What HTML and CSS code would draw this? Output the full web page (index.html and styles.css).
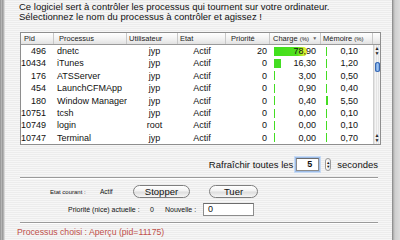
FILE: index.html
```html
<!DOCTYPE html>
<html lang="fr">
<head>
    <meta charset="UTF-8">
    <title>Processus</title>
    <link rel="stylesheet" href="styles.css">
</head>
<body>
    <div class="desk">
        <div class="drawer-left"></div>
        <div class="window">
            <p class="intro">Ce logiciel sert à contrôler les processus qui tournent sur votre ordinateur.<br>Sélectionnez le nom du processus à contrôler et agissez !</p>

            <div class="list">
                <div class="list-head">
                    <div class="col c-pid">Pid</div>
                    <div class="col c-name">Processus</div>
                    <div class="col c-user">Utilisateur</div>
                    <div class="col c-state">Etat</div>
                    <div class="col c-prio">Priorité</div>
                    <div class="col c-load">Charge <small>(%)</small> <span class="sort">▼</span></div>
                    <div class="col c-mem">Mémoire <small>(%)</small></div>
                    <div class="col c-corner"></div>
                </div>
                <div class="list-body">
                    <div class="rows">
                        <div class="row">
                            <div class="col c-pid">496</div>
                            <div class="col c-name">dnetc</div>
                            <div class="col c-user">jyp</div>
                            <div class="col c-state">Actif</div>
                            <div class="col c-prio">20</div>
                            <div class="col c-load"><div class="gauge"><span class="fill hot" style="width: 78.9%"></span><span class="val">78,90</span></div></div>
                            <div class="col c-mem"><div class="gauge"><span class="fill" style="width: 0.1%"></span><span class="val">0,10</span></div></div>
                        </div>
                        <div class="row">
                            <div class="col c-pid">10434</div>
                            <div class="col c-name">iTunes</div>
                            <div class="col c-user">jyp</div>
                            <div class="col c-state">Actif</div>
                            <div class="col c-prio">0</div>
                            <div class="col c-load"><div class="gauge"><span class="fill" style="width: 16.3%"></span><span class="val">16,30</span></div></div>
                            <div class="col c-mem"><div class="gauge"><span class="fill" style="width: 1.2%"></span><span class="val">1,20</span></div></div>
                        </div>
                        <div class="row">
                            <div class="col c-pid">176</div>
                            <div class="col c-name">ATSServer</div>
                            <div class="col c-user">jyp</div>
                            <div class="col c-state">Actif</div>
                            <div class="col c-prio">0</div>
                            <div class="col c-load"><div class="gauge"><span class="fill" style="width: 3%"></span><span class="val">3,00</span></div></div>
                            <div class="col c-mem"><div class="gauge"><span class="fill" style="width: 0.5%"></span><span class="val">0,50</span></div></div>
                        </div>
                        <div class="row">
                            <div class="col c-pid">454</div>
                            <div class="col c-name">LaunchCFMApp</div>
                            <div class="col c-user">jyp</div>
                            <div class="col c-state">Actif</div>
                            <div class="col c-prio">0</div>
                            <div class="col c-load"><div class="gauge"><span class="fill" style="width: 0.9%"></span><span class="val">0,90</span></div></div>
                            <div class="col c-mem"><div class="gauge"><span class="fill" style="width: 0.4%"></span><span class="val">0,40</span></div></div>
                        </div>
                        <div class="row">
                            <div class="col c-pid">180</div>
                            <div class="col c-name">Window Manager</div>
                            <div class="col c-user">jyp</div>
                            <div class="col c-state">Actif</div>
                            <div class="col c-prio">0</div>
                            <div class="col c-load"><div class="gauge"><span class="fill" style="width: 0.4%"></span><span class="val">0,40</span></div></div>
                            <div class="col c-mem"><div class="gauge"><span class="fill" style="width: 5.5%"></span><span class="val">5,50</span></div></div>
                        </div>
                        <div class="row">
                            <div class="col c-pid">10751</div>
                            <div class="col c-name">tcsh</div>
                            <div class="col c-user">jyp</div>
                            <div class="col c-state">Actif</div>
                            <div class="col c-prio">0</div>
                            <div class="col c-load"><div class="gauge"><span class="fill" style="width: 0%"></span><span class="val">0,00</span></div></div>
                            <div class="col c-mem"><div class="gauge"><span class="fill" style="width: 0.1%"></span><span class="val">0,10</span></div></div>
                        </div>
                        <div class="row">
                            <div class="col c-pid">10749</div>
                            <div class="col c-name">login</div>
                            <div class="col c-user">root</div>
                            <div class="col c-state">Actif</div>
                            <div class="col c-prio">0</div>
                            <div class="col c-load"><div class="gauge"><span class="fill" style="width: 0%"></span><span class="val">0,00</span></div></div>
                            <div class="col c-mem"><div class="gauge"><span class="fill" style="width: 0.1%"></span><span class="val">0,10</span></div></div>
                        </div>
                        <div class="row">
                            <div class="col c-pid">10747</div>
                            <div class="col c-name">Terminal</div>
                            <div class="col c-user">jyp</div>
                            <div class="col c-state">Actif</div>
                            <div class="col c-prio">0</div>
                            <div class="col c-load"><div class="gauge"><span class="fill" style="width: 0%"></span><span class="val">0,00</span></div></div>
                            <div class="col c-mem"><div class="gauge"><span class="fill" style="width: 0.7%"></span><span class="val">0,70</span></div></div>
                        </div>
                    </div>
                    <div class="scrollbar">
                        <div class="arrows"><span>▲</span><span>▼</span></div>
                        <div class="track"><span class="thumb"></span></div>
                        <div class="arrows"><span>▲</span><span>▼</span></div>
                    </div>
                </div>
            </div>

            <div class="refresh">
                <span>Rafraîchir toutes les</span>
                <span class="field focus">5</span>
                <span class="stepper"><i>▲</i><i>▼</i></span>
                <span>secondes</span>
            </div>

            <div class="rule"></div>

            <div class="ctrl-row state-row">
                <span class="label l-state">Etat courant :</span>
                <span class="label v-state">Actif</span>
                <button class="pill b-stop">Stopper</button>
                <button class="pill b-kill">Tuer</button>
            </div>
            <div class="ctrl-row prio-row">
                <span class="label l-prio">Priorité (nice) actuelle :</span>
                <span class="label v-prio">0</span>
                <span class="label l-new">Nouvelle :</span>
                <span class="field new-field">0</span>
            </div>

            <div class="rule"></div>

            <p class="status">Processus choisi : Aperçu (pid=11175)</p>
        </div>
        <div class="drawer-right"></div>
    </div>
</body>
</html>
```

FILE: styles.css
```css
body {
    margin: 0;
    width: 400px;
    height: 240px;
    overflow: hidden;
    font-family: "Liberation Sans", Arial, sans-serif;
    color: #111;
}
.desk {
    display: flex;
    height: 240px;
}
.drawer-left {
    width: 5px;
    background: repeating-linear-gradient(to right, #9c9c9c 0 1px, #b4b4b4 1px 2px);
    border-right: 1px solid #d8d8d8;
    box-sizing: border-box;
}
.drawer-right {
    width: 8px;
    background: linear-gradient(to right, #7a7a7a 0, #a8a8a8 1px, #cfcfcf 3px, #dcdcdc 8px);
}
.window {
    flex: 1;
    display: flex;
    flex-direction: column;
    background: repeating-linear-gradient(#ececec 0 1px, #f6f6f6 1px 2px);
    padding-left: 14px;
}
.intro {
    margin: 2px 0 0;
    font-size: 9.5px;
    line-height: 10px;
}

/* liste des processus */
.list {
    margin: 10px 0 0 1px;
    width: 359px;
    border: 1px solid #8e8e8e;
    background: #fff;
}
.list-head {
    display: flex;
    height: 11px;
    font-size: 7.5px;
    line-height: 11px;
    background: linear-gradient(#ffffff, #f0f0f0 60%, #e2e2e2);
    border-bottom: 1px solid #9a9a9a;
}
.list-head small {
    font-size: 6px;
}
.list-head .col {
    border-right: 1px solid #c8c8c8;
    box-sizing: border-box;
    color: #222;
}
.list-head .c-pid { padding-left: 3px; }
.list-head .c-name { padding-left: 5px; }
.list-head .c-user { padding-left: 2px; }
.list-head .c-state { padding-left: 2px; }
.list-head .c-prio { padding-left: 5px; }
.list-head .c-load { padding-left: 3px; }
.list-head .c-mem { padding-left: 2px; }
.list-head .c-corner { border-right: none; }
.sort {
    font-size: 5px;
    color: #666;
    vertical-align: 1px;
    margin-left: 1px;
}
.col {
    flex: none;
    white-space: nowrap;
    overflow: hidden;
}
.c-pid { width: 33px; }
.c-name { width: 73px; }
.c-user { width: 51px; }
.c-state { width: 48px; }
.c-prio { width: 44px; }
.c-load { width: 51px; }
.c-mem { width: 52px; }
.c-corner { width: 7px; }

.list-body {
    display: flex;
}
.rows {
    flex: none;
    width: 352px;
}
.row {
    display: flex;
    height: 12.4px;
    font-size: 9px;
    line-height: 12.4px;
    align-items: center;
}
.row .c-pid { text-align: right; padding-right: 8px; box-sizing: border-box; }
.row .c-name { padding-left: 3px; box-sizing: border-box; }
.row .c-user { text-align: center; padding-left: 4px; box-sizing: border-box; }
.row .c-state { text-align: center; }
.row .c-prio { text-align: right; padding-right: 3px; box-sizing: border-box; }
.row .c-load { padding: 0 5px 0 4px; box-sizing: border-box; }
.row .c-mem { padding: 0 15px 0 5px; box-sizing: border-box; }

.gauge {
    display: grid;
    align-items: center;
}
.gauge > span {
    grid-area: 1 / 1;
}
.fill {
    height: 9px;
    min-width: 1px;
    background: #44dd22;
}
.fill.hot {
    background: linear-gradient(to right, #3fe01c 0, #52e01e 70%, #c8ee2c 88%, #f2f23a 100%);
    border-radius: 0 4px 4px 0;
}
.val {
    text-align: right;
    position: relative;
}

.scrollbar {
    flex: none;
    width: 7px;
    display: flex;
    flex-direction: column;
    background: repeating-linear-gradient(to right, #e4e4e4 0 1px, #f4f4f4 1px 2px);
    border-left: 1px solid #d0d0d0;
    box-sizing: border-box;
}
.arrows {
    display: flex;
    flex-direction: column;
    align-items: center;
    font-size: 5px;
    line-height: 5px;
    color: #222;
    padding: 1px 0;
}
.track {
    flex: 1;
    padding-top: 5px;
    display: flex;
    justify-content: center;
}
.thumb {
    width: 5px;
    height: 10px;
    border-radius: 3px;
    background: linear-gradient(to right, #4a7fd0, #9cc4f2 50%, #5a8edc);
    box-shadow: inset 0 0 0 1px #3a68b0;
}

/* rafraîchissement */
.refresh {
    display: flex;
    align-items: center;
    justify-content: flex-end;
    margin: 13px 14px 0 0;
    height: 13px;
    font-size: 9.5px;
}
.field {
    box-sizing: border-box;
    height: 13px;
    background: #fff;
    border: 1px solid #8c8c8c;
    border-top-color: #6c6c6c;
    font-size: 9px;
    line-height: 11px;
}
.field.focus {
    width: 23px;
    margin-left: 3px;
    text-align: right;
    padding-right: 6px;
    box-shadow: 0 0 0 1px #9ebde8, 0 0 0 2px #c6daf4;
    font-weight: bold;
}
.stepper {
    display: flex;
    flex-direction: column;
    justify-content: center;
    width: 6px;
    height: 13px;
    margin: 0 6px;
    border: 1px solid #9a9a9a;
    border-radius: 3px;
    background: linear-gradient(to right, #fff, #e6e6e6);
    box-sizing: border-box;
    font-size: 4px;
    line-height: 4px;
    text-align: center;
}
.stepper i {
    font-style: normal;
}

.rule {
    height: 1px;
    width: 358px;
    margin-left: 1px;
    background: #9a9a9a;
    border-bottom: 1px solid #ffffff;
}
.refresh + .rule {
    margin-top: 6px;
}

/* contrôles */
.ctrl-row {
    display: flex;
    align-items: center;
    font-size: 7px;
}
.state-row {
    margin-top: 6px;
    height: 13px;
    padding-left: 31px;
}
.prio-row {
    margin-top: 5px;
    height: 13px;
    padding-left: 49px;
}
.l-state { width: 50px; font-size: 6px; }
.v-state { width: 33px; font-size: 6.5px; }
.l-prio { width: 82px; }
.v-prio { width: 15px; }
.l-new { width: 38px; }
.pill {
    height: 13px;
    padding: 0;
    border: 1px solid #7e7e7e;
    border-radius: 7px;
    background: linear-gradient(#ffffff, #f2f2f2 45%, #dedede 55%, #f6f6f6);
    font-family: inherit;
    font-size: 9.5px;
    line-height: 11px;
    color: #111;
}
.b-stop { width: 57px; }
.b-kill { width: 49px; margin-left: 19px; }
.new-field {
    width: 51px;
    padding-left: 4px;
}
.prio-row + .rule {
    margin-top: 6px;
}
.status {
    margin: 3px 0 0 -2px;
    font-size: 8.7px;
    color: #c0504a;
}
```
